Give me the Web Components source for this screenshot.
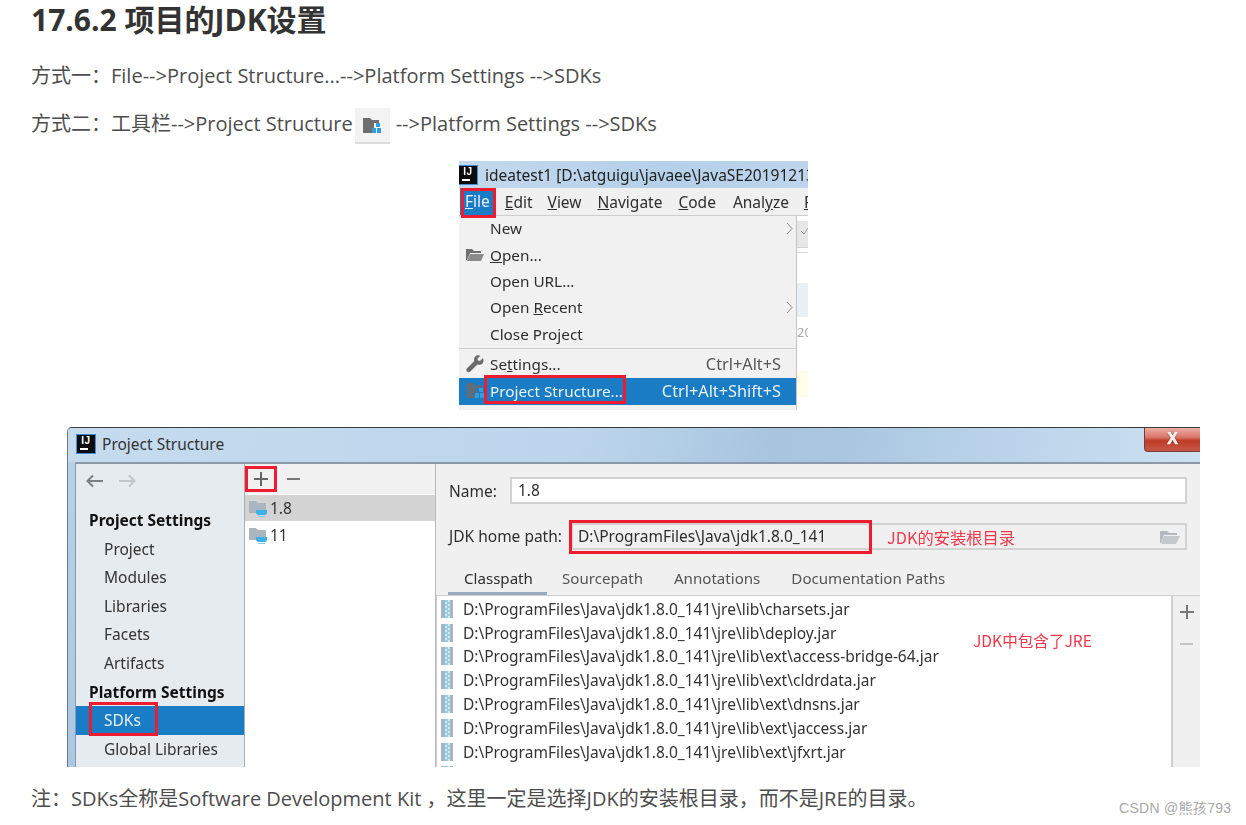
<!DOCTYPE html>
<html lang="zh">
<head>
<meta charset="utf-8">
<title>17.6.2 项目的JDK设置</title>
<style>
  html, body { margin: 0; background: #fff; }
  body { height: 825px; overflow: hidden; font-family: "Open Sans", "Noto Sans CJK SC", sans-serif; }
  u { text-underline-offset: 2px; text-decoration-thickness: 1px; }
</style>
</head>
<body>
<doc-page>
  <doc-heading>17.6.2 项目的JDK设置</doc-heading>
  <doc-para top="20">方式一：File--&gt;Project Structure...--&gt;Platform Settings --&gt;SDKs</doc-para>
  <doc-para top="20">方式二：工具栏--&gt;Project Structure<toolbar-icon></toolbar-icon>--&gt;Platform Settings --&gt;SDKs</doc-para>

  <menu-shot></menu-shot>

  <structure-shot></structure-shot>

  <doc-para top="18">注：SDKs全称是Software Development Kit ，这里一定是选择JDK的安装根目录，而不是JRE的目录。</doc-para>
</doc-page>
<csdn-mark>CSDN @熊孩793</csdn-mark>

<script>
const uiFont = '"Noto Sans", "Noto Sans CJK SC", sans-serif';
const activeBlue = '#1a7cc4';
const annotationRed = '#ee1c2e';

const folderCup = `<svg width="19" height="18" viewBox="0 0 19 18"><path d="M0 2h7l2 2h8v10H0z" fill="#a9b6c0"/><path d="M7 11h11v2.500q0 2.500-3 2.500h-5q-3 0-3-2.500z" fill="#3eb0e6"/><path d="M9 17h7v1H9z" fill="#7ccbef"/></svg>`;
const jarIcon = `<svg width="12" height="18" viewBox="0 0 12 18"><rect width="12" height="18" fill="#aab6bf"/><rect x="4" width="5" height="18" fill="#cfeaf6"/><path d="M4 1h3M6 3h3M4 5h3M6 7h3M4 9h3M6 11h3M4 13h3M6 15h3M4 17h3" stroke="#58b6dd"/></svg>`;
const projectIcon = (dark) => `<svg width="18" height="15" viewBox="0 0 18 15"><path d="M0 0h7l2 2h7v13H0z" fill="${dark}"/><rect x="11" y="5" width="7" height="10" fill="${dark === '#6e6e6e' ? '#f2f2f2' : activeBlue}"/><path d="M13 5h4v4h-4zM9 10h4v5H9zM14 10h4v5h-4z" fill="#2f9fe0"/></svg>`;
const chevron = `<svg width="7" height="13" viewBox="0 0 7 13"><path d="M1 1l5 5.500L1 12" fill="none" stroke="#8c8c8c"/></svg>`;

function define(tag, css, html, setup) {
  customElements.define(tag, class extends HTMLElement {
    connectedCallback() {
      if (this.shadowRoot) return;
      this.attachShadow({ mode: 'open' });
      this.shadowRoot.innerHTML = `<style>${css}</style>${typeof html === 'function' ? html(this) : html}`;
      if (setup) setup(this);
    }
  });
}

define('doc-page', `
  :host { display: block; width: 1205px; margin-left: 31px; }
`, '<slot></slot>');

define('doc-heading', `
  :host { display: block; height: 42px; font: 700 30px/40px "Open Sans", "Noto Sans CJK SC", sans-serif; color: #333; white-space: nowrap; }
`, '<slot></slot>');

define('doc-para', `
  :host { display: block; height: 28px; font: 400 20px/28px "Open Sans", "Noto Sans CJK SC", sans-serif; color: #4d4d4d; white-space: nowrap; }
`, '<slot></slot>', (el) => { el.style.marginTop = el.getAttribute('top') + 'px'; });

define('toolbar-icon', `
  :host { display: inline-flex; align-items: center; justify-content: center; box-sizing: border-box; width: 35px; height: 36px; margin: -4px 6px -4px 2px; vertical-align: middle; background: #f3f3f3; border-bottom: 2px solid #dcdcdc; padding-top: 2px; }
`, projectIcon('#6e6e6e'));

define('red-box', `
  :host { display: block; position: absolute; box-sizing: border-box; border: 3px solid ${annotationRed}; pointer-events: none; }
`, '');

define('ij-logo', `
  :host { display: block; box-sizing: border-box; position: relative; flex: none; width: 18px; height: 18px; background: #0c0c0c; outline: 1px solid #3f8fd8; color: #fff; font: 700 10px/12px "Liberation Sans", sans-serif; text-align: center; letter-spacing: 0.5px; }
  i { position: absolute; left: 3px; top: 13px; width: 8px; height: 2px; background: #fff; }
`, '<span>IJ</span><i></i>');

define('menu-row', `
  :host { display: grid; grid-template-columns: 31px 1fr auto 15px; align-items: center; box-sizing: border-box; height: 26.400px; padding-bottom: 2px; font-size: 15.300px; color: #2e2e2e; white-space: nowrap; }
  :host([active]) { background: ${activeBlue}; color: #e9f2fa; }
  .icon { display: flex; justify-content: center; padding-left: 1px; }
  .keys { font-size: 16.300px; color: #555; }
  :host([active]) .keys { color: #e9f2fa; }
  .arrow { display: flex; justify-content: center; padding-left: 2px; }
`, (el) => `
  <span class="icon"><slot name="icon"></slot></span>
  <span><slot></slot></span>
  <span class="keys">${el.getAttribute('shortcut') || ''}</span>
  <span class="arrow">${el.hasAttribute('arrow') ? chevron : ''}</span>`);

define('menu-shot', `
  :host { display: block; position: relative; width: 349px; height: 249px; margin: 23px 0 0 428px; overflow: hidden; font: 400 15px/20px ${uiFont}; filter: blur(0.4px); background: #fff; }
  .title { display: flex; align-items: center; gap: 8px; height: 27px; background: linear-gradient(90deg, #c3d8ec, #b5d0ea 60%, #bdd5ec); white-space: nowrap; color: #222; font-size: 15.500px; }
  .bar { display: flex; align-items: center; height: 27px; background: #f0f0f0; border-bottom: 1px solid #cfcfcf; color: #2e2e2e; white-space: nowrap; font-size: 15.500px; }
  .bar span { margin-left: 19px; }
  .bar .file { margin-left: 1px; padding: 0 5px; height: 27px; line-height: 27px; background: ${activeBlue}; color: #e9f2fa; }
  .body { display: grid; grid-template-columns: 338px 11px; height: 194px; }
  .menu { background: #f1f1f1; border-right: 1px solid #c4c4c4; }
  .sep { height: 1px; margin: 0 0 3px; background: #cdcdcd; }
  .strip { display: flex; flex-direction: column; background: #fff; color: #aaa; font-size: 13px; }
  .tool { display: flex; padding: 5px 0 0 4px; box-sizing: border-box; height: 27px; margin-top: 5px; background: #e7e7e7; border-bottom: 1px solid #d2d2d2; }
  .rule { height: 1px; margin-top: 4px; background: #dedede; }
  .soft { height: 34px; margin-top: 30px; background: #eaeff5; }
  .yr { height: 18px; line-height: 18px; margin-top: 6px; }
  .pale { height: 26px; margin-top: 30px; background: #fffee9; }
  .tail { height: 6px; background: #f1f1f1; }
`, `
  <div class="title"><ij-logo></ij-logo><span>ideatest1 [D:\\atguigu\\javaee\\JavaSE20191213</span></div>
  <div class="bar"><span class="file"><u>F</u>ile</span><span style="margin-left:10px"><u>E</u>dit</span><span style="margin-left:15px"><u>V</u>iew</span><span style="margin-left:16px"><u>N</u>avigate</span><span style="margin-left:16px"><u>C</u>ode</span><span style="margin-left:17px">Anal<u>y</u>ze</span><span style="margin-left:15px"><u>F</u></span></div>
  <div class="body">
    <div class="menu">
      <menu-row arrow>New</menu-row>
      <menu-row><svg slot="icon" width="18" height="14" viewBox="0 0 18 14"><path d="M0 1h6l2 2h7v2H4L1 12H0z" fill="#6f6f6f"/><path d="M4 6h14l-3 7H1z" fill="#8a8a8a"/></svg><u>O</u>pen...</menu-row>
      <menu-row>Open URL...</menu-row>
      <menu-row arrow>Open <u>R</u>ecent</menu-row>
      <menu-row>Close Project</menu-row>
      <div class="sep"></div>
      <menu-row shortcut="Ctrl+Alt+S"><svg slot="icon" width="18" height="18" viewBox="0 0 18 18"><path d="M17 3l-3 3-2-.500L11.500 3.500 14.500.800Q11 -.500 9 1.800 7.500 3.800 8.300 6L.800 13.500q-1 2 .5 3.300 1.500 1 3-.3L11.500 9.500q3 1 5-1 1.700-2.200.5-5.500z" fill="#6b6b6b"/></svg>Se<u>t</u>tings...</menu-row>
      <menu-row active shortcut="Ctrl+Alt+Shift+S"><span slot="icon" style="display:flex">${projectIcon('#5c6e7e')}</span>Project Structure...</menu-row>
      <div class="tail"></div>
    </div>
    <div class="strip">
      <div class="tool"><svg width="7" height="9" viewBox="0 0 7 9"><path d="M0 5l3 3 4-6" fill="none" stroke="#999"/></svg></div>
      <div class="rule"></div>
      <div class="soft"></div>
      <div class="yr">20</div>
      <div class="pale"></div>
    </div>
  </div>
  <red-box style="left:2px;top:27px;width:35px;height:30px"></red-box>
  <red-box style="left:25px;top:214px;width:142px;height:29px"></red-box>
`);

define('nav-item', `
  :host { display: block; height: 28.600px; line-height: 28.600px; padding-left: 28px; color: #333; white-space: nowrap; }
  :host([head]) { padding-left: 13px; font-weight: 700; color: #111; }
  :host([active]) { background: ${activeBlue}; color: #e9f2fa; }
`, '<slot></slot>');

define('sdk-row', `
  :host { display: flex; align-items: center; height: 26.400px; padding-left: 4px; gap: 2px; color: #333; }
  :host([active]) { background: #d3d3d3; }
`, `${folderCup}<slot></slot>`);

define('jar-row', `
  :host { display: flex; align-items: center; height: 23.800px; padding-left: 4px; gap: 10px; color: #333; white-space: nowrap; }
  svg { flex: none; }
`, `${jarIcon}<slot></slot>`);

define('tab-item', `
  :host { display: block; padding: 0 16px 0 15px; height: 33px; line-height: 33px; font-size: 15.100px; color: #555; box-sizing: border-box; white-space: nowrap; }
  :host([active]) { width: 99px; padding: 0 0 0 16px; color: #2e2e2e; border-bottom: 3px solid #9aa9bf; }
`, '<slot></slot>');

define('structure-shot', `
  :host { display: block; position: relative; box-sizing: border-box; width: 1133px; height: 340px; margin: 17px 0 0 36px; overflow: hidden; font: 400 15.500px/20px ${uiFont}; filter: blur(0.4px); background: linear-gradient(180deg, #b8d2ea, #a9c8e4); border-top: 1px solid #3c3c3c; border-left: 1px solid #6f7780; border-radius: 5px 0 0 0; }
  .title { display: flex; align-items: center; gap: 7px; box-sizing: border-box; height: 34px; padding: 0 0 2px 9px; background: linear-gradient(100deg, #c6dbee 0%, #bcd5ec 45%, #a8c5e0 62%, #a9c6e1 68%, #bad3ea 82%, #cde0f1 100%); color: #333; }
  .close { position: absolute; right: 0; top: 0; width: 56px; height: 24px; box-sizing: border-box; border: 1px solid #7b3a33; border-top: 0; border-right: 0; border-radius: 0 0 0 4px; background: linear-gradient(180deg, #edaea5 0%, #d9766a 40%, #bd3c27 55%, #c65746 100%); color: #f2f2f2; font: 700 16px/22px "Liberation Sans", sans-serif; -webkit-text-stroke: 0.6px #f2f2f2; text-align: center; text-shadow: 0 0 2px #6a2a20; }
  .frame { display: grid; grid-template-columns: 169px 191px 1fr; height: 305px; margin-left: 7px; border-top: 2px solid #8a98a8; border-left: 1px solid #8a98a8; }
  .side { background: #e6ebf0; border-right: 1px solid #a9aeb3; }
  .arrows { display: flex; gap: 16px; height: 43px; padding: 10px 0 0 10px; box-sizing: border-box; }
  .nav { margin-top: -1px; }
  .mid { background: #fff; border-right: 1px solid #b8b8b8; }
  .tools { display: flex; align-items: center; gap: 19px; height: 30px; padding: 0 0 0 9px; margin-bottom: 1px; background: #f1f1f1; box-sizing: border-box; }
  .main { background: #f0f0f0; min-width: 0; }
  .form { display: grid; grid-template-columns: 61px 1fr; row-gap: 19px; padding: 13px 13px 0 13px; color: #2e2e2e; align-items: center; }
  .input { height: 27px; box-sizing: border-box; line-height: 23px; padding-left: 6px; background: #fff; border: 2px solid #d2d2d2; }
  .jdk { grid-column: 1 / 3; position: relative; height: 27px; line-height: 27px; white-space: nowrap; }
  .path { position: absolute; left: 122px; right: 0; top: 0; height: 27px; box-sizing: border-box; line-height: 23px; padding-left: 5px; border: 2px solid #d2d2d2; white-space: nowrap; }
  .path svg { position: absolute; right: 5px; top: 5px; }
  .tabs { display: flex; height: 33px; margin-top: 12px; padding-left: 12px; border-bottom: 1px solid #cfcfcf; }
  .lower { display: grid; grid-template-columns: 735px 29px; height: 172px; }
  .list { background: #fff; border-left: 1px solid #cfcfcf; overflow: hidden; padding-top: 1px; }
  .actions { display: flex; flex-direction: column; align-items: center; gap: 18px; padding-top: 9px; border-left: 2px solid #d0d0d0; box-sizing: border-box; }
  .note { position: absolute; color: #f2374a; font: 400 16.300px/22px "Noto Sans CJK SC", sans-serif; white-space: nowrap; }
`, `
  <div class="title"><ij-logo></ij-logo><span>Project Structure</span></div>
  <div class="close">X</div>
  <div class="frame">
    <div class="side">
      <div class="arrows">
        <svg width="17" height="14" viewBox="0 0 17 14"><path d="M7 1.500 1.500 7 7 12.500M2 7h15" fill="none" stroke="#7a7f84" stroke-width="2"/></svg>
        <svg width="17" height="14" viewBox="0 0 17 14"><path d="M10 1.500 15.500 7 10 12.500M15 7H0" fill="none" stroke="#c2c6ca" stroke-width="2"/></svg>
      </div>
      <div class="nav">
        <nav-item head>Project Settings</nav-item>
        <nav-item>Project</nav-item>
        <nav-item>Modules</nav-item>
        <nav-item>Libraries</nav-item>
        <nav-item>Facets</nav-item>
        <nav-item>Artifacts</nav-item>
        <nav-item head>Platform Settings</nav-item>
        <nav-item active>SDKs</nav-item>
        <nav-item>Global Libraries</nav-item>
      </div>
    </div>
    <div class="mid">
      <div class="tools">
        <svg width="14" height="14" viewBox="0 0 14 14"><path d="M7 0v14M0 7h14" stroke="#666" stroke-width="2"/></svg>
        <svg width="13" height="14" viewBox="0 0 13 14"><path d="M0 7h13" stroke="#777" stroke-width="2"/></svg>
      </div>
      <sdk-row active>1.8</sdk-row>
      <sdk-row>11</sdk-row>
    </div>
    <div class="main">
      <div class="form">
        <span>Name:</span><div class="input">1.8</div>
        <div class="jdk"><span>JDK home path:</span><div class="path">D:\\ProgramFiles\\Java\\jdk1.8.0_141<svg width="20" height="15" viewBox="0 0 20 15"><path d="M0 1h7l2 2h8v2H4L1 13H0z" fill="#b4bac0"/><path d="M4 6h16l-4 8H1z" fill="#c3c8cd"/></svg></div></div>
      </div>
      <div class="tabs"><tab-item active>Classpath</tab-item><tab-item>Sourcepath</tab-item><tab-item>Annotations</tab-item><tab-item>Documentation Paths</tab-item></div>
      <div class="lower">
        <div class="list">
          <jar-row>D:\\ProgramFiles\\Java\\jdk1.8.0_141\\jre\\lib\\charsets.jar</jar-row>
          <jar-row>D:\\ProgramFiles\\Java\\jdk1.8.0_141\\jre\\lib\\deploy.jar</jar-row>
          <jar-row>D:\\ProgramFiles\\Java\\jdk1.8.0_141\\jre\\lib\\ext\\access-bridge-64.jar</jar-row>
          <jar-row>D:\\ProgramFiles\\Java\\jdk1.8.0_141\\jre\\lib\\ext\\cldrdata.jar</jar-row>
          <jar-row>D:\\ProgramFiles\\Java\\jdk1.8.0_141\\jre\\lib\\ext\\dnsns.jar</jar-row>
          <jar-row>D:\\ProgramFiles\\Java\\jdk1.8.0_141\\jre\\lib\\ext\\jaccess.jar</jar-row>
          <jar-row>D:\\ProgramFiles\\Java\\jdk1.8.0_141\\jre\\lib\\ext\\jfxrt.jar</jar-row>
          <jar-row></jar-row>
        </div>
        <div class="actions">
          <svg width="14" height="14" viewBox="0 0 14 14"><path d="M7 0v14M0 7h14" stroke="#777" stroke-width="2"/></svg>
          <svg width="13" height="14" viewBox="0 0 13 14"><path d="M0 7h13" stroke="#c4c4c4" stroke-width="2"/></svg>
        </div>
      </div>
    </div>
  </div>
  <red-box style="left:177px;top:38px;width:32px;height:26px"></red-box>
  <red-box style="left:21px;top:274px;width:69px;height:34px"></red-box>
  <red-box style="left:501px;top:92px;width:303px;height:34px"></red-box>
  <span class="note" style="left:819px;top:98px">JDK的安装根目录</span>
  <span class="note" style="left:905px;top:201px;font-size:15.600px">JDK中包含了JRE</span>
`);

define('csdn-mark', `
  :host { display: block; position: absolute; left: 1119px; top: 799px; font: 400 14px/18px "Liberation Sans", "Noto Sans CJK SC", sans-serif; letter-spacing: 0.3px; color: #a8a8a8; white-space: nowrap; }
`, '<slot></slot>');
</script>
</body>
</html>
